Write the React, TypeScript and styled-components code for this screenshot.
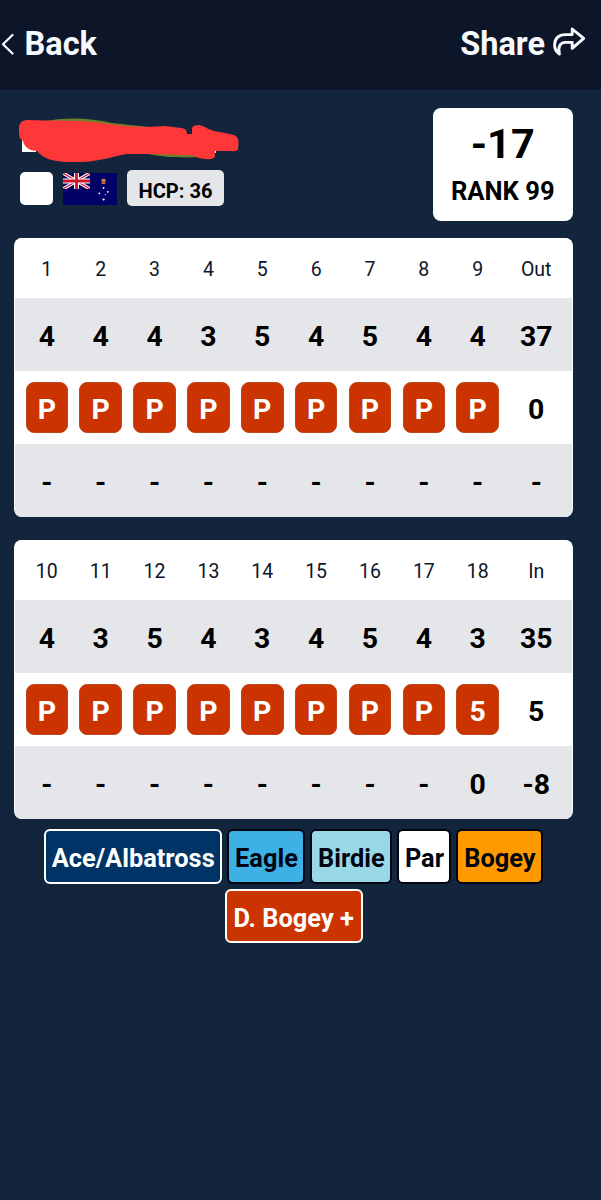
import React from "react";
import styled, { createGlobalStyle } from "styled-components";

const Global = createGlobalStyle`
  * { box-sizing: border-box; }
  body {
    margin: 0;
    background: #12253d;
    font-family: Roboto, "Liberation Sans", sans-serif;
    color: #000;
  }
`;

const Page = styled.div`
  width: 601px;
  min-height: 1200px;
  background: #12253d;
`;

const TopBar = styled.header`
  height: 90px;
  padding: 0 15px 4px 1px;
  display: flex;
  align-items: center;
  justify-content: space-between;
  background: #0d1628;
`;

const NavButton = styled.button`
  display: flex;
  align-items: center;
  padding: 0;
  border: 0;
  background: none;
  color: #f8faff;
  font: 700 32.5px/40px Roboto, sans-serif;
`;

const NavLabel = styled.span`
  padding-top: 1px;
`;

const BackLabel = styled(NavLabel)`
  margin-left: 9.5px;
`;

const ShareIcon = styled.svg`
  margin: 0 0 2px 8px;
`;

const Content = styled.main`
  padding: 18px 28.5px 0 14.3px;
`;

const Profile = styled.section`
  display: flex;
  justify-content: space-between;
  height: 130px;
`;

const Identity = styled.div`
  padding: 6px 0 0 3.7px;
`;

const NameMark = styled.svg`
  display: block;
`;

const Tags = styled.div`
  display: flex;
  align-items: flex-start;
  margin: 7px 0 0 2px;
`;

const Swatch = styled.div`
  width: 33px;
  height: 33px;
  margin-top: 2px;
  border-radius: 5px;
  background: #fff;
`;

const Flag = styled.svg`
  margin: 2.5px 10px 0 10px;
`;

const Handicap = styled.div`
  width: 97px;
  height: 36px;
  margin-top: -0.5px;
  padding-top: 3px;
  border-radius: 5px;
  background: #e5e6ea;
  font-size: 20.1px;
  font-weight: 700;
  line-height: 36px;
  text-align: center;
`;

const RankCard = styled.div`
  width: 139.5px;
  height: 113px;
  padding-top: 12px;
  border-radius: 8px;
  background: #fff;
  text-align: center;
  font-weight: 700;
`;

const Total = styled.div`
  font-size: 41.5px;
  line-height: 48px;
`;

const Rank = styled.div`
  margin-top: 8px;
  font-size: 25.6px;
  line-height: 30px;
`;

const Card = styled.section`
  margin-bottom: 23px;
  border-radius: 8px;
  overflow: hidden;
  background: #fff;
`;

const Row = styled.div<{ $shaded?: boolean }>`
  display: grid;
  grid-template-columns: repeat(9, 53.87px) 63.2px;
  align-items: center;
  height: 73px;
  margin: 0 1px;
  padding-left: 4.6px;
  background: ${(p) => (p.$shaded ? "#e5e6ea" : "#fff")};
  font-size: 28.4px;
  font-weight: 700;
  text-align: center;
`;

const Cell = styled.div`
  padding-top: 3px;
  line-height: 33px;
`;

const HoleRow = styled(Row)`
  height: 60px;
  color: #0d1628;
  font-size: 19.5px;
  font-weight: 400;

  ${Cell} {
    padding-top: 2px;
    line-height: 23px;
  }
`;

const Score = styled.div`
  justify-self: center;
  width: 42.5px;
  height: 51px;
  padding-top: 2px;
  border: 1px solid #b9481c;
  border-radius: 8px;
  background: #cb3400;
  color: #fff;
  line-height: 49px;
`;

const Legend = styled.div`
  display: flex;
  flex-wrap: wrap;
  justify-content: center;
  gap: 5px;
  margin: -13px 0 0 0.6px;
`;

const Chip = styled.div<{ $bg: string; $w: number; $light?: boolean }>`
  display: flex;
  justify-content: center;
  width: ${(p) => p.$w}px;
  height: 54.5px;
  border: 2px solid ${(p) => (p.$light ? "#fff" : "#000510")};
  border-radius: 6px;
  background: ${(p) => p.$bg};
  color: ${(p) => (p.$light ? "#fff" : "#000510")};
  font-size: 25.4px;
  font-weight: 700;
  line-height: 55px;
  white-space: nowrap;
`;

type Nine = { holes: string[]; par: string[]; strokes: string[]; net: string[] };

const nines: Nine[] = [
  {
    holes: ["1", "2", "3", "4", "5", "6", "7", "8", "9", "Out"],
    par: ["4", "4", "4", "3", "5", "4", "5", "4", "4", "37"],
    strokes: ["P", "P", "P", "P", "P", "P", "P", "P", "P", "0"],
    net: ["-", "-", "-", "-", "-", "-", "-", "-", "-", "-"],
  },
  {
    holes: ["10", "11", "12", "13", "14", "15", "16", "17", "18", "In"],
    par: ["4", "3", "5", "4", "3", "4", "5", "4", "3", "35"],
    strokes: ["P", "P", "P", "P", "P", "P", "P", "P", "5", "5"],
    net: ["-", "-", "-", "-", "-", "-", "-", "-", "0", "-8"],
  },
];

const legend = [
  { label: "Ace/Albatross", bg: "#003366", w: 178.5, light: true },
  { label: "Eagle", bg: "#3db0e6", w: 78 },
  { label: "Birdie", bg: "#99d8e7", w: 82 },
  { label: "Par", bg: "#ffffff", w: 54 },
  { label: "Bogey", bg: "#ff9900", w: 87 },
  { label: "D. Bogey +", bg: "#cb3400", w: 138, light: true },
];

const cells = (items: string[]) => items.map((v, i) => <Cell key={i}>{v}</Cell>);

const Scorecard = ({ nine }: { nine: Nine }) => (
  <Card>
    <HoleRow>{cells(nine.holes)}</HoleRow>
    <Row $shaded>{cells(nine.par)}</Row>
    <Row>
      {nine.strokes.map((v, i) => (i < 9 ? <Score key={i}>{v}</Score> : <Cell key={i}>{v}</Cell>))}
    </Row>
    <Row $shaded>{cells(nine.net)}</Row>
  </Card>
);

const AustralianFlag = () => (
  <Flag width="54" height="32" viewBox="0 0 54 32">
    <rect width="54" height="32" fill="#000066" />
    <svg width="27" height="16" viewBox="0 0 27 16">
      <path d="M0 0L27 16M27 0L0 16" stroke="#fff" strokeWidth="3.4" />
      <path d="M0 0L27 16M27 0L0 16" stroke="#d0142c" strokeWidth="1.2" />
      <path d="M13.5 0V16M0 8H27" stroke="#fff" strokeWidth="5" />
      <path d="M13.5 0V16M0 8H27" stroke="#d0142c" strokeWidth="2.8" />
    </svg>
    <path d="M38.3 6.5q2.2-1.6 4.4 0l-.6 4.5h-3.2z" fill="#c9835c" />
    <path d="M39 9.2h3" stroke="#b3262d" strokeWidth="1" />
    <g fill="#fff">
      <circle cx="40.6" cy="15" r=".9" />
      <circle cx="36.3" cy="20.3" r=".9" />
      <circle cx="44.8" cy="18.8" r=".9" />
      <circle cx="42.3" cy="21.6" r=".6" />
      <circle cx="40.6" cy="26.5" r="1.1" />
    </g>
  </Flag>
);

export default function App() {
  return (
    <>
      <Global />
      <Page>
        <TopBar>
          <NavButton>
            <svg width="14" height="24" viewBox="0 0 14 24" fill="none" stroke="currentColor" strokeWidth="2.2" strokeLinecap="round" strokeLinejoin="round">
              <path d="M11.500 4L2 13.200L11.500 22.500" />
            </svg>
            <BackLabel>Back</BackLabel>
          </NavButton>
          <NavButton>
            <NavLabel>Share</NavLabel>
            <ShareIcon width="33" height="30" viewBox="0 0 33 30" fill="none" stroke="currentColor" strokeWidth="2.9" strokeLinecap="round" strokeLinejoin="round">
              <path d="M19.2 2L30.700 11.400L19.200 21.400V15.400H12.500C7 15.400 4.600 20 6.400 27C3 24.800 1.600 21.500 1.600 18C1.600 11.500 5.500 7.600 12.500 7.600H19.200Z" />
            </ShareIcon>
          </NavButton>
        </TopBar>
        <Content>
          <Profile>
            <Identity>
              <NameMark width="222" height="49" viewBox="18 114 222 49">
                <path d="M22 139h14v13H22zM212 148h4v5h-4z" fill="#fff" />
                <path d="M47 121C65 117 92 118 112 123L150 127L120 132L50 127ZM148 154C163 157 179 158 204 157L190 150Z" fill="#6c812b" />
                <path d="M27 120C53 121 75 120 93 122C112 124 126 127 147 127L165 126L181 128Q187 128 187 134H192V128Q193 125 199 125C207 127 209 131 220 132L234 135Q239 137 238.500 143L238 149Q237 152 230 151H215V156Q214 160 205 159C195 158 198 155 184 155L150 154H127C113 156 102 161 83 162H66C50 161 43 158 37 151C30 151 24 147 23 141Q18 139 19 127Q20 120 27 120Z" fill="#fe3738" />
              </NameMark>
              <Tags>
                <Swatch />
                <AustralianFlag />
                <Handicap>HCP: 36</Handicap>
              </Tags>
            </Identity>
            <RankCard>
              <Total>-17</Total>
              <Rank>RANK 99</Rank>
            </RankCard>
          </Profile>
          {nines.map((nine) => (
            <Scorecard key={nine.holes[0]} nine={nine} />
          ))}
          <Legend>
            {legend.map((c) => (
              <Chip key={c.label} $bg={c.bg} $w={c.w} $light={c.light}>
                {c.label}
              </Chip>
            ))}
          </Legend>
        </Content>
      </Page>
    </>
  );
}
